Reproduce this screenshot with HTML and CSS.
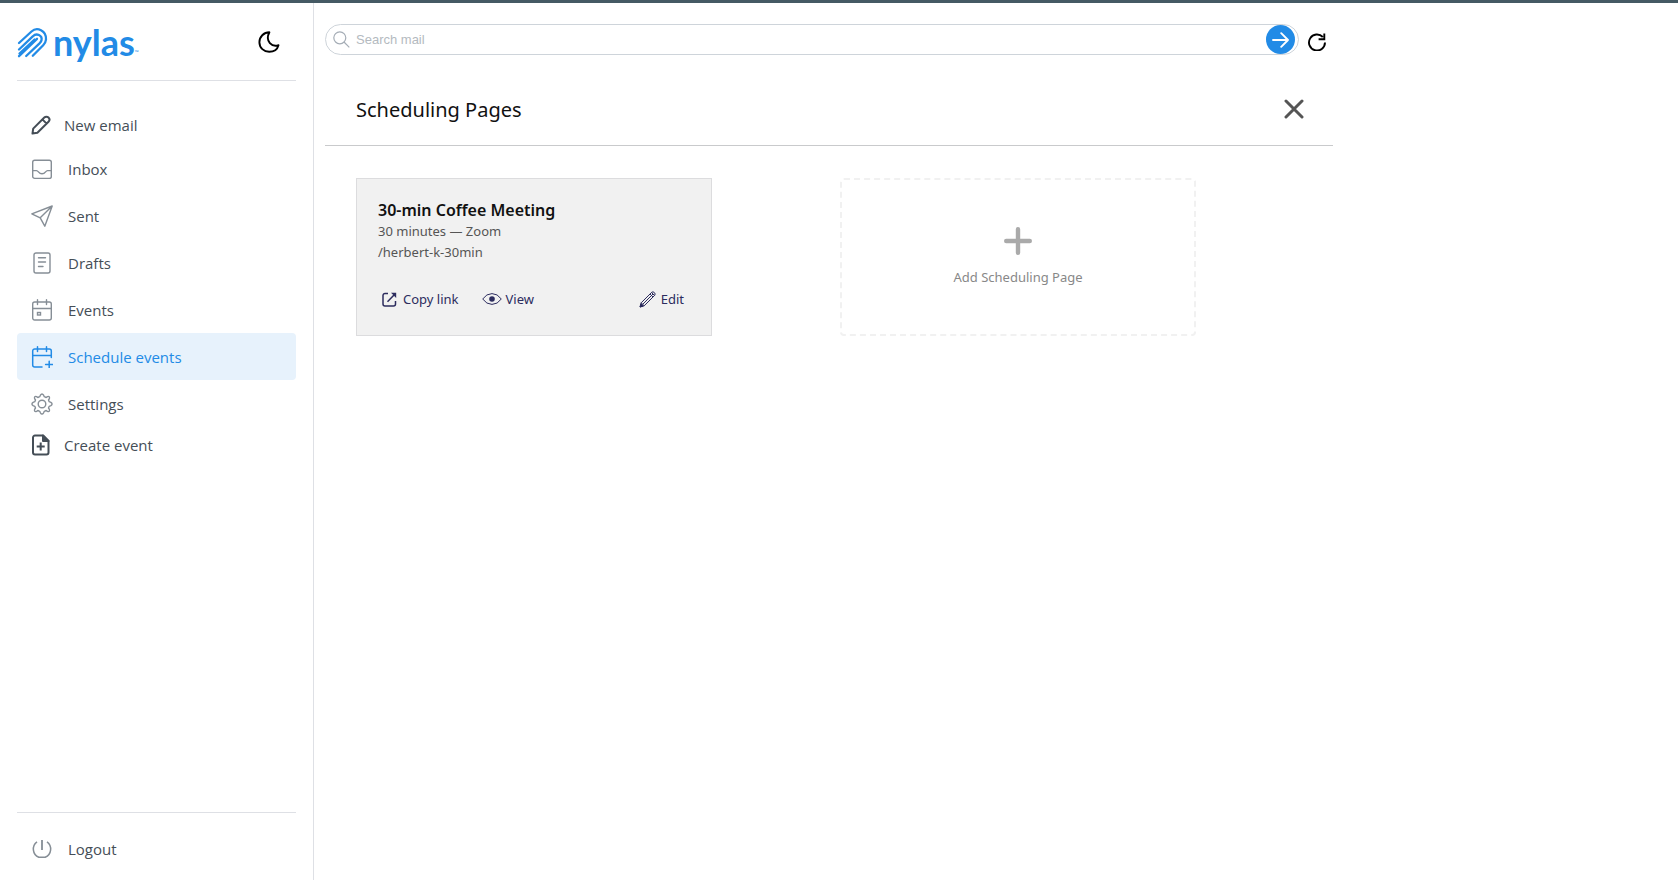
FILE: index.html
```html
<!DOCTYPE html>
<html lang="en">
<head>
<meta charset="utf-8">
<title>Scheduling Pages</title>
<link rel="stylesheet" href="styles.css">
</head>
<body>
<div class="app">
  <aside class="sidebar">
    <header class="brand-row">
      <a class="brand" href="#">
        <svg class="brand-mark" width="32" height="32" viewBox="0 0 32 32" fill="none" stroke="currentColor" stroke-width="2.3" stroke-linecap="round" stroke-linejoin="round" aria-hidden="true">
          <path d="M2 17 14.500 5.500C20 0.500 29.500 4.500 29 13.500C28.800 16 27.800 17.600 26.200 19.200L15.800 29.800"/>
          <path d="M2 23.500 16 10.200C19.500 6.500 25.500 9.500 24.500 14.200C24.200 15.500 23.600 16.200 22.800 17.100L9.200 30"/>
          <path d="M2 30.200 20 12.800"/>
          <path d="M2.500 27.500 17.500 13.500"/>
        </svg>
        <span class="brand-name">nylas</span><span class="brand-tm">™</span>
      </a>
      <button class="icon-button" type="button" aria-label="Dark mode">
        <svg width="22" height="22" viewBox="0 0 22 22" fill="none" stroke="currentColor" stroke-width="1.900" stroke-linejoin="round"><path d="M11.400 1.300C5.700 1.300 1.400 5.900 1.400 11.200C1.400 16.700 5.900 20.800 11.200 20.800C15.700 20.800 19.400 18.200 20.500 14.200C14.500 16.500 6.500 10.500 11.400 1.300Z"/></svg>
      </button>
    </header>
    <nav class="nav">
      <a class="nav-item compact" href="#">
        <svg width="20" height="20" viewBox="0 0 20 20" fill="none" stroke="currentColor" stroke-width="2" stroke-linejoin="round"><path d="M1.500 18.500 2.200 13.600 13.300 2.500A2.800 2.800 0 0 1 17.500 6.700L6.400 17.800ZM11.400 4.400 15.600 8.600"/></svg>
        New email</a>
      <a class="nav-item" href="#">
        <svg width="22" height="22" viewBox="0 0 22 22" fill="none" stroke="currentColor" stroke-width="1.400"><rect x="1.700" y="2.200" width="18.600" height="18.200" rx="2"/><path d="M1.700 12.600H5.500C7.500 12.600 7.500 15.800 11 15.800S14.500 12.600 16.500 12.600H20.300"/></svg>
        Inbox</a>
      <a class="nav-item" href="#">
        <svg width="22" height="22" viewBox="0 0 22 22" fill="none" stroke="currentColor" stroke-width="1.400" stroke-linejoin="round"><path d="M.8 8.800 21.200 1 13.800 21.200 9.200 12.800ZM9.200 12.800 21.200 1"/></svg>
        Sent</a>
      <a class="nav-item" href="#">
        <svg width="22" height="22" viewBox="0 0 22 22" fill="none" stroke="currentColor" stroke-width="1.400" stroke-linecap="round"><rect x="3" y="1" width="16" height="20" rx="2"/><path d="M7.500 5.700H14.500M7.500 10H14.500M7.500 14.500H12"/></svg>
        Drafts</a>
      <a class="nav-item" href="#">
        <svg width="22" height="22" viewBox="0 0 22 22" fill="none" stroke="currentColor" stroke-width="1.400" stroke-linecap="round"><rect x="1.700" y="3" width="18.600" height="18" rx="2"/><path d="M1.700 9.500H20.300M6.500 .8V5.500M15.500 .8V5.500"/><rect x="6.500" y="13.500" width="3" height="2.500"/></svg>
        Events</a>
      <a class="nav-item active" href="#" aria-current="page">
        <svg width="22" height="22" viewBox="0 0 22 22" fill="none" stroke="currentColor" stroke-width="1.500" stroke-linecap="round"><path d="M11 21H3.700A2 2 0 0 1 1.700 19V5A2 2 0 0 1 3.700 3H18.300A2 2 0 0 1 20.300 5V11.500M1.700 9.500H20.300M6.500 .8V5.500M15.500 .8V5.500M18.200 15.300V22M14.600 18.600H21.700"/></svg>
        Schedule events</a>
      <a class="nav-item" href="#">
        <svg width="22" height="22" viewBox="0 0 22 22" fill="none" stroke="currentColor" stroke-width="1.400" stroke-linejoin="round"><circle cx="11" cy="11" r="3.800"/><path d="M9.400 2.200Q11 -.2 12.600 2.200L13.300 3.700 15.200 4.500 16.400 3.600Q19 2.700 18.400 5.600L17.500 7 18.200 8.700 19.900 9.400Q22.200 11 19.900 12.600L18.200 13.300 17.500 15 18.400 16.400Q19 19.300 16.400 18.400L15.200 17.500 13.300 18.300 12.600 19.800Q11 22.200 9.400 19.800L8.700 18.300 6.800 17.500 5.600 18.400Q3 19.300 3.600 16.400L4.500 15 3.800 13.300 2.100 12.600Q-.2 11 2.100 9.400L3.800 8.700 4.500 7 3.600 5.600Q3 2.700 5.600 3.600L6.800 4.500 8.700 3.700Z"/></svg>
        Settings</a>
      <a class="nav-item compact" href="#">
        <svg width="20" height="22" viewBox="0 0 20 22" fill="none" stroke="currentColor" stroke-width="2" stroke-linejoin="round"><path d="M12 1.500H4A2 2 0 0 0 2 3.500V18.500A2 2 0 0 0 4 20.500H15.500A2 2 0 0 0 17.500 18.500V7ZM9.700 8.500V16.500M5.700 12.500H13.700"/><path d="M12 1.500V7H17.500Z" fill="currentColor"/></svg>
        Create event</a>
    </nav>
    <footer class="sidebar-foot">
      <a class="nav-item" href="#">
        <svg width="22" height="22" viewBox="0 0 22 22" fill="none" stroke="currentColor" stroke-width="1.500"><path d="M6 3.800A9 9 0 0 0 7.800 19.300H14.200A9 9 0 0 0 16 3.800"/><path d="M11 2V12" stroke-width="1.800"/></svg>
        Logout</a>
    </footer>
  </aside>
  <main class="main">
    <form class="search-row" role="search">
      <div class="search-box">
        <svg width="17" height="17" viewBox="0 0 17 17" fill="none" stroke="currentColor" stroke-width="1.200"><circle cx="6.800" cy="6.800" r="6"/><path d="M11 11 16.300 16.300"/></svg>
        <input class="search-input" type="search" placeholder="Search mail" aria-label="Search mail">
        <button class="search-go" type="submit" aria-label="Search">
          <svg width="17" height="16" viewBox="0 0 17 16" fill="none" stroke="currentColor" stroke-width="1.900" stroke-linecap="round" stroke-linejoin="round"><path d="M1 8H16M9.200 1.200 16 8 9.200 14.800"/></svg>
        </button>
      </div>
      <button class="icon-button refresh" type="button" aria-label="Refresh">
        <svg width="18" height="18" viewBox="0 0 18 18" fill="none" stroke="currentColor" stroke-width="1.900"><path d="M14.800 4A8 8 0 1 0 17 9.600M16.300 .5V6.200H10.600"/></svg>
      </button>
    </form>
    <section class="pages">
      <header class="pages-head">
        <h1 class="pages-title">Scheduling Pages</h1>
        <button class="icon-button close" type="button" aria-label="Close">
          <svg width="20" height="20" viewBox="0 0 20 20" stroke="currentColor" stroke-width="3" stroke-linecap="round"><path d="M2 2 18 18M18 2 2 18"/></svg>
        </button>
      </header>
      <div class="cards">
        <article class="card">
          <h2 class="card-title">30-min Coffee Meeting</h2>
          <p class="card-line">30 minutes — Zoom</p>
          <p class="card-line">/herbert-k-30min</p>
          <div class="card-actions">
            <button class="action" type="button">
              <svg width="15" height="15" viewBox="0 0 15 15" fill="none" stroke="currentColor" stroke-width="1.500"><path d="M6 1.500H3A2 2 0 0 0 1 3.500V12A2 2 0 0 0 3 14H11.500A2 2 0 0 0 13.500 12V9M5.500 9.800 12 3"/><path d="M9 .8H14.200V6Z" fill="currentColor" stroke="none"/></svg>
              Copy link</button>
            <button class="action view" type="button">
              <svg width="20" height="12" viewBox="0 0 20 12" fill="none" stroke="currentColor"><path d="M.7 6Q4.500 .6 10 .6T19.300 6Q15.500 11.400 10 11.400T.7 6Z"/><circle cx="10" cy="6" r="2.800" fill="currentColor" stroke="none"/></svg>
              View</button>
            <button class="action edit" type="button">
              <svg width="17" height="17" viewBox="0 0 17 17" fill="none" stroke="currentColor" stroke-linejoin="round"><path d="M1 16 2.200 11.800 12.700 1.300Q14 .2 15.400 1.600T15.700 4.300L5.200 14.800ZM2.200 11.800 5.200 14.800M3.700 13.300 14 3M11 3 14 6M12.500 1.500 15.500 4.500"/><path d="M1 16 2 12.800 4.200 15Z" fill="currentColor"/></svg>
              Edit</button>
          </div>
        </article>
        <button class="add-card" type="button">
          <svg width="28" height="28" viewBox="0 0 28 28" stroke="currentColor" stroke-width="4.400" stroke-linecap="round"><path d="M14 2.200V25.800M2.200 14H25.800"/></svg>
          Add Scheduling Page
        </button>
      </div>
    </section>
  </main>
</div>
</body>
</html>
```
FILE: styles.css
```css
* { box-sizing: border-box; }

body {
  margin: 0;
  background: #fff;
  color: #454e57;
  font-family: "Noto Sans", "Open Sans", sans-serif;
  font-size: 13px;
}

button {
  padding: 0;
  border: 0;
  background: none;
  font: inherit;
  cursor: pointer;
}

svg { display: block; flex: none; }

.app {
  display: flex;
  min-height: 100vh;
  border-top: 3px solid #455a64;
}

.sidebar {
  display: flex;
  flex-direction: column;
  flex: none;
  width: 314px;
  padding: 0 17px;
  border-right: 1px solid #dee0e5;
}

.brand-row {
  display: flex;
  align-items: center;
  justify-content: space-between;
  height: 78px;
  padding-right: 16px;
  border-bottom: 1px solid #dee0e5;
}

.brand {
  display: flex;
  align-items: center;
  color: #228be6;
  text-decoration: none;
}

.brand-name {
  margin-left: 4px;
  font-family: Lato, sans-serif;
  font-size: 36px;
  font-weight: 700;
  line-height: 36px;
}

.brand-tm { align-self: flex-end; font-size: 5px; line-height: 16px; }

.icon-button { color: #000; }

.nav { flex: 1; padding-top: 26px; }

.nav-item {
  display: flex;
  align-items: center;
  gap: 15px;
  height: 47px;
  padding-left: 14px;
  border-radius: 4px;
  color: #454e57;
  font-family: "Open Sans", "Noto Sans", sans-serif;
  font-size: 15px;
  text-decoration: none;
}

.nav-item svg { color: #868e96; }

.nav-item.compact { gap: 13px; height: 36px; margin-bottom: 2px; }
.nav-item.compact svg { color: #454e57; }

.nav-item.active { background: #e7f2fc; color: #228be6; }
.nav-item.active svg { color: #228be6; }

.sidebar-foot {
  padding: 12px 0 8px;
  border-top: 1px solid #dee0e5;
}

.main {
  flex: 1;
  max-width: 1019px;
  padding: 21px 0 0 11px;
}

.search-row {
  display: flex;
  align-items: center;
  gap: 9px;
  padding-right: 7px;
}

.search-box {
  display: flex;
  flex: 1;
  align-items: center;
  gap: 6px;
  height: 31px;
  padding: 0 3px 0 7px;
  border: 1px solid #ced4da;
  border-radius: 16px;
  color: #a5adb6;
}

.search-input {
  flex: 1;
  padding: 0;
  border: 0;
  outline: 0;
  background: none;
  color: #454e57;
  font-family: "Liberation Sans", Arial, sans-serif;
  font-size: 13px;
}

.search-input::placeholder { color: #b4bac0; }

.search-go {
  display: flex;
  align-items: center;
  justify-content: center;
  width: 29px;
  height: 29px;
  border-radius: 50%;
  background: #228be6;
  color: #fff;
}

.refresh { padding-top: 5px; }

.pages-head {
  display: flex;
  align-items: center;
  justify-content: space-between;
  height: 91px;
  padding: 18px 29px 0 31px;
  border-bottom: 1px solid #c9cacc;
}

.pages-title {
  margin: 0;
  color: #111;
  font-size: 20px;
  font-weight: 400;
}

.close { color: #555; }

.cards {
  display: grid;
  grid-template-columns: 1fr 1fr;
  gap: 128px;
  padding: 32px 137px 32px 31px;
}

.card {
  padding: 20px 27px 24px 21px;
  border: 1px solid #dcdcde;
  background: #f1f1f1;
}

.card-title {
  margin: 0;
  color: #111;
  font-size: 16px;
  font-weight: 600;
  line-height: 22px;
}

.card-line { margin: 0; color: #555; line-height: 21px; }

.card-actions {
  display: flex;
  gap: 23px;
  margin-top: 24px;
  padding-left: 4px;
}

.action {
  display: flex;
  align-items: center;
  gap: 6px;
  color: #2c2c5e;
  line-height: 24px;
}

.action.view { gap: 4px; }
.action.edit { margin-left: auto; gap: 5px; }

.add-card {
  display: flex;
  flex-direction: column;
  align-items: center;
  justify-content: center;
  gap: 12px;
  border: 2px dashed #f1f1f1;
  border-radius: 4px;
  color: #888;
  line-height: 20px;
}

.add-card svg { color: #aaa; }
```
